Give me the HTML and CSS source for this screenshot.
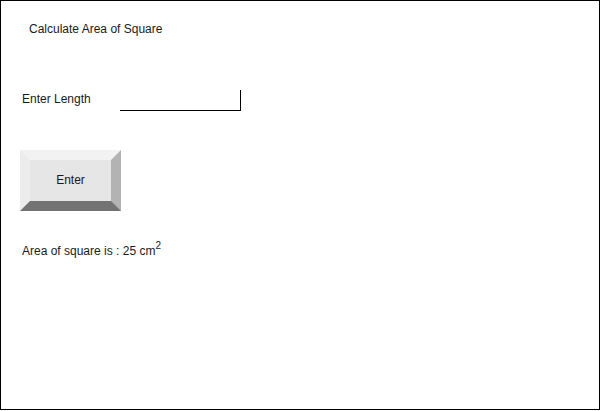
FILE: index.html
```html
<!DOCTYPE html>
<html>
<head>
<meta charset="utf-8">
<link rel="stylesheet" href="styles.css">
</head>
<body>
<div class="frame">
  <div class="title">Calculate Area of Square</div>
  <div class="row">
    <span class="label">Enter Length</span>
    <span class="field"></span>
  </div>
  <div class="button">Enter</div>
  <div class="result">Area of square is : 25 cm<sup>2</sup></div>
</div>
</body>
</html>
```
FILE: styles.css
```css
html, body {
  margin: 0;
  padding: 0;
  background: #fff;
}
.frame {
  width: 600px;
  height: 410px;
  box-sizing: border-box;
  border: 1px solid #000;
  padding: 21px 0 0 21px;
  display: flex;
  flex-direction: column;
  align-items: flex-start;
  font-family: "Liberation Sans", Arial, sans-serif;
  font-size: 12px;
  color: #1a1a1a;
}
.title {
  line-height: 14px;
  margin-left: 7px;
}
.row {
  margin-top: 54px;
  display: flex;
  align-items: flex-start;
  height: 21px;
}
.label {
  width: 98px;
  line-height: 14px;
  margin-top: 2px;
}
.field {
  width: 120px;
  height: 20px;
  border-right: 1px solid #000;
  border-bottom: 1px solid #000;
}
.button {
  margin-top: 39px;
  margin-left: -2px;
  width: 81px;
  height: 41px;
  border-style: solid;
  border-width: 10px;
  border-color: #f2f2f2 #b3b3b3 #737373 #ececec;
  background: #e6e6e6;
  display: flex;
  align-items: center;
  justify-content: center;
  line-height: 14px;
  padding-bottom: 1px;
  box-sizing: content-box;
  height: 40px;
}
.result {
  margin-top: 33px;
  line-height: 14px;
}
.result sup {
  font-size: 10px;
  line-height: 0;
  vertical-align: 6px;
}
```
